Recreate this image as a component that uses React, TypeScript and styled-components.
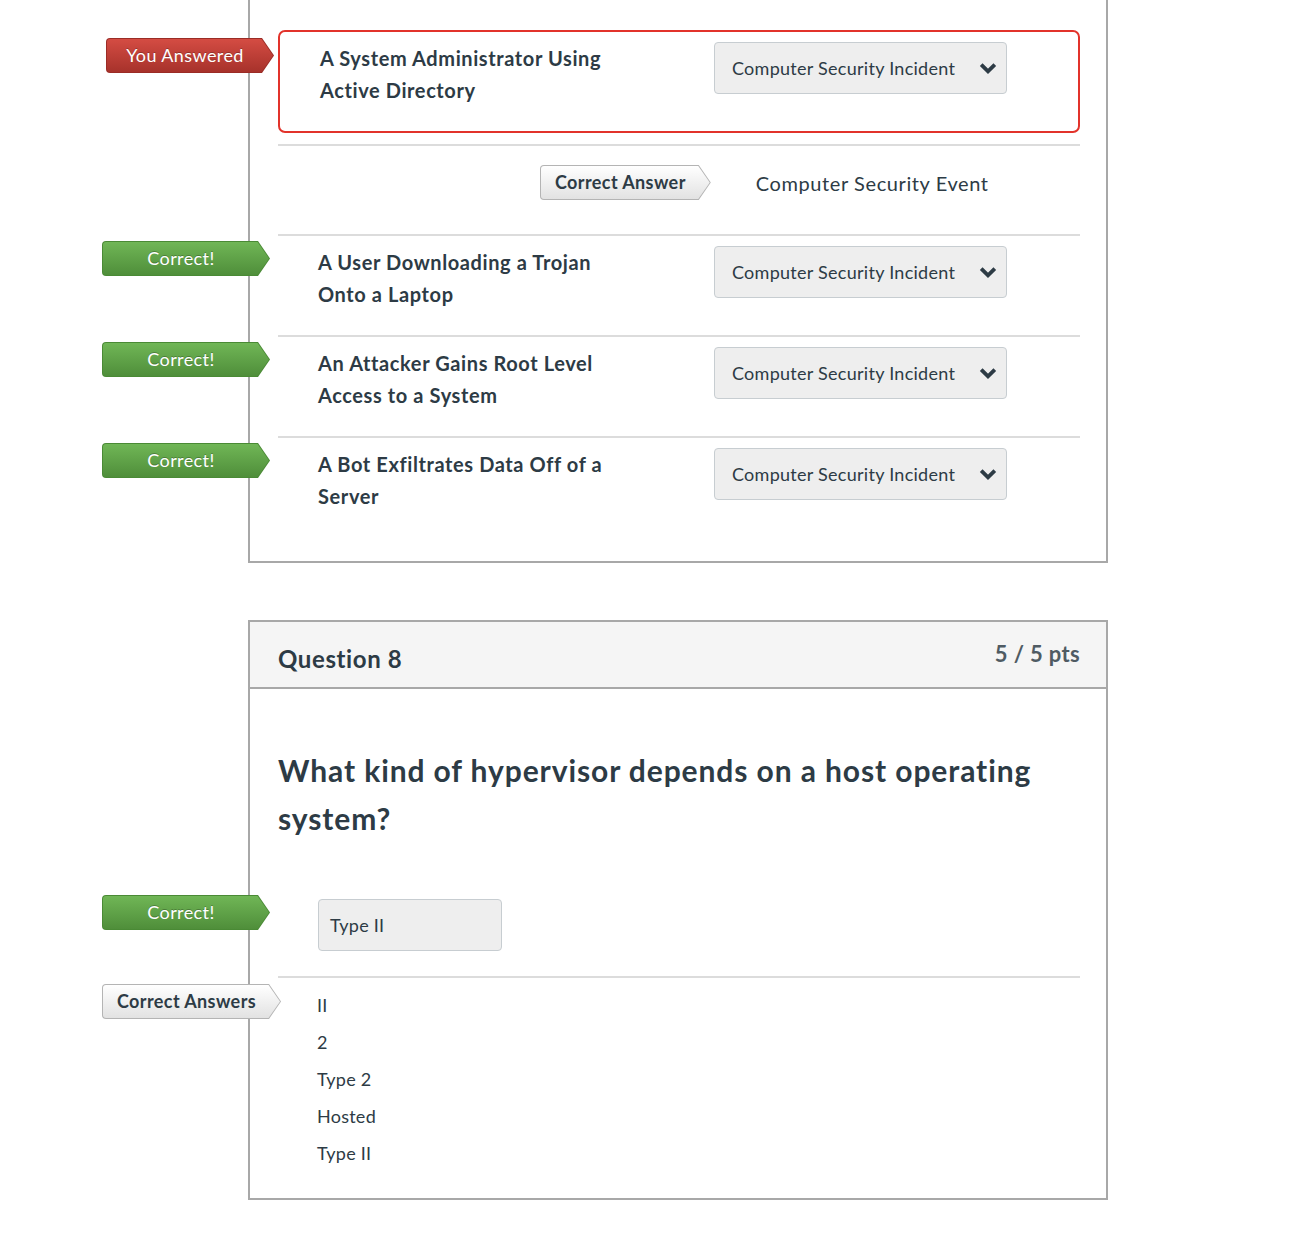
import React from "react";
import styled, { createGlobalStyle, css } from "styled-components";

const Global = createGlobalStyle`
  html, body { margin: 0; padding: 0; background: #fff; }
  body { font-family: Lato, "Open Sans", "Liberation Sans", sans-serif; color: #2d3b45; }
  * { box-sizing: border-box; }
`;

const Page = styled.div`
  width: 1302px;
  padding-left: 248px;
  padding-bottom: 52px;
`;

const Card = styled.section<{ $openTop?: boolean }>`
  width: 860px;
  border: 2px solid #a8a8a8;
  ${(p) =>
    p.$openTop &&
    css`
      border-top: none;
      padding-top: 30px;
      padding-bottom: 24px;
    `}
  & + & {
    margin-top: 57px;
  }
`;

const CardBody = styled.div<{ $top?: number; $bottom?: number }>`
  padding: ${(p) => p.$top ?? 0}px 26px ${(p) => p.$bottom ?? 0}px 28px;
`;

const Divider = styled.div<{ $gap?: number }>`
  height: 2px;
  background: #dcdcdc;
  margin-top: ${(p) => p.$gap ?? 0}px;
`;

type Variant = "red" | "green" | "gray";

const variants = {
  red: { edge: "#9b2c26", top: "#d44c43", bottom: "#a7322b", color: "#fff", weight: 400 },
  green: { edge: "#4a8a35", top: "#70b656", bottom: "#4f8e3a", color: "#fff", weight: 400 },
  gray: { edge: "#b4b4b4", top: "#ffffff", bottom: "#e2e2e2", color: "#2d3b45", weight: 700 },
};

const shape = "polygon(0 0, calc(100% - 12px) 0, 100% 50%, calc(100% - 12px) 100%, 0 100%)";

const Flag = styled.div<{ $v: Variant; $abs?: boolean; $left?: number; $top?: number }>`
  height: 35px;
  min-width: 168px;
  padding: 0 25px 0 15px;
  display: inline-flex;
  align-items: center;
  justify-content: center;
  position: relative;
  border-radius: 4px 0 0 4px;
  clip-path: ${shape};
  background: ${(p) => variants[p.$v].edge};
  font-size: 18px;
  letter-spacing: 0.4px;
  line-height: 1;
  white-space: nowrap;
  font-weight: ${(p) => variants[p.$v].weight};
  color: ${(p) => variants[p.$v].color};
  ${(p) =>
    p.$abs &&
    css`
      position: absolute;
      left: ${p.$left}px;
      top: ${p.$top}px;
    `}
  &::before {
    content: "";
    position: absolute;
    inset: 1px;
    border-radius: 3px 0 0 3px;
    clip-path: polygon(0 0, calc(100% - 11.5px) 0, 100% 50%, calc(100% - 11.5px) 100%, 0 100%);
    background: linear-gradient(${(p) => variants[p.$v].top}, ${(p) => variants[p.$v].bottom});
  }
  span {
    position: relative;
    margin-top: -2px;
    text-shadow: ${(p) => (p.$v === "gray" ? "none" : "0 -1px 0 rgba(0,0,0,0.25)")};
  }
`;

const RowWrap = styled.div`
  position: relative;
`;

const AnsweredBox = styled.div`
  border: 2px solid #e2332b;
  border-radius: 7px;
  padding: 10px 0 25px 40px;
  display: grid;
  grid-template-columns: 394px auto;
  align-items: start;
`;

const MatchRow = styled.div`
  position: relative;
  padding: 10px 0 25px 40px;
  display: grid;
  grid-template-columns: 396px auto;
  align-items: start;
`;

const Prompt = styled.div`
  font-size: 20px;
  line-height: 32px;
  font-weight: 700;
  letter-spacing: 0.6px;
  color: #2d3b45;
  width: 310px;
`;

const Select = styled.div`
  width: 293px;
  height: 52px;
  background: #eeeeee;
  border: 1px solid #c7cdd1;
  border-radius: 4px;
  display: flex;
  align-items: center;
  justify-content: space-between;
  padding: 0 9px 0 17px;
  font-size: 18px;
  letter-spacing: 0.27px;
  color: #2d3b45;
`;

const Chevron = styled.svg`
  width: 18px;
  height: 13px;
  margin-top: 1px;
  flex: none;
`;

const CorrectRow = styled.div`
  padding: 19px 0 34px 262px;
  display: flex;
  align-items: center;
  gap: 45px;
`;

const CorrectText = styled.span`
  font-size: 20px;
  letter-spacing: 0.6px;
  color: #2d3b45;
`;

const Header = styled.header`
  height: 67px;
  background: #f5f5f5;
  border-bottom: 2px solid #a8a8a8;
  padding: 0 26px 0 28px;
  display: flex;
  justify-content: space-between;
  align-items: flex-start;
`;

const Title = styled.h2`
  margin: 22px 0 0;
  font-size: 24px;
  line-height: 30px;
  font-weight: 700;
  letter-spacing: 0.6px;
  color: #2d3b45;
`;

const Points = styled.div`
  margin-top: 17px;
  font-size: 22px;
  line-height: 30px;
  font-weight: 700;
  letter-spacing: 0.35px;
  color: #4f5b63;
`;

const QuestionText = styled.p`
  margin: 0 0 57px;
  font-size: 30px;
  line-height: 48px;
  font-weight: 700;
  letter-spacing: 0.9px;
  color: #2d3b45;
`;

const InputRow = styled.div`
  position: relative;
  padding-left: 40px;
  margin-bottom: 25px;
`;

const TextInput = styled.div`
  width: 184px;
  height: 52px;
  background: #eeeeee;
  border: 1px solid #c7cdd1;
  border-radius: 4px;
  display: flex;
  align-items: center;
  padding-left: 11px;
  font-size: 18px;
  letter-spacing: 0.25px;
  color: #2d3b45;
`;

const AnswerList = styled.ul`
  position: relative;
  list-style: none;
  margin: 0;
  padding: 9px 0 0 39px;
`;

const AnswerItem = styled.li`
  font-size: 18px;
  line-height: 37px;
  height: 37px;
  letter-spacing: 0.25px;
  color: #2d3b45;
`;

const matches = [
  "A User Downloading a Trojan Onto a Laptop",
  "An Attacker Gains Root Level Access to a System",
  "A Bot Exfiltrates Data Off of a Server",
];

const SelectBox = ({ value }: { value: string }) => (
  <Select>
    <span>{value}</span>
    <Chevron viewBox="0 0 18 13" aria-hidden="true">
      <polyline
        points="2.2,2.6 9,9.4 15.8,2.6"
        fill="none"
        stroke="#2d3b45"
        strokeWidth="3.8"
        strokeLinejoin="miter"
      />
    </Chevron>
  </Select>
);

export default function App() {
  return (
    <>
      <Global />
      <Page>
        <Card $openTop>
          <CardBody>
            <RowWrap>
              <Flag $v="red" $abs $left={-172} $top={8}>
                <span>You Answered</span>
              </Flag>
              <AnsweredBox>
                <Prompt>A System Administrator Using Active Directory</Prompt>
                <SelectBox value="Computer Security Incident" />
              </AnsweredBox>
            </RowWrap>
            <Divider $gap={11} />
            <CorrectRow>
              <Flag $v="gray">
                <span>Correct Answer</span>
              </Flag>
              <CorrectText>Computer Security Event</CorrectText>
            </CorrectRow>
            {matches.map((prompt) => (
              <React.Fragment key={prompt}>
                <Divider />
                <MatchRow>
                  <Flag $v="green" $abs $left={-176} $top={5}>
                    <span>Correct!</span>
                  </Flag>
                  <Prompt>{prompt}</Prompt>
                  <SelectBox value="Computer Security Incident" />
                </MatchRow>
              </React.Fragment>
            ))}
          </CardBody>
        </Card>

        <Card>
          <Header>
            <Title>Question 8</Title>
            <Points>5 / 5 pts</Points>
          </Header>
          <CardBody $top={57} $bottom={26}>
            <QuestionText>What kind of hypervisor depends on a host operating system?</QuestionText>
            <InputRow>
              <Flag $v="green" $abs $left={-176} $top={-4}>
                <span>Correct!</span>
              </Flag>
              <TextInput>Type II</TextInput>
            </InputRow>
            <Divider />
            <AnswerList>
              <Flag $v="gray" $abs $left={-176} $top={6}>
                <span>Correct Answers</span>
              </Flag>
              {["II", "2", "Type 2", "Hosted", "Type II"].map((a, i) => (
                <AnswerItem key={i}>{a}</AnswerItem>
              ))}
            </AnswerList>
          </CardBody>
        </Card>
      </Page>
    </>
  );
}
